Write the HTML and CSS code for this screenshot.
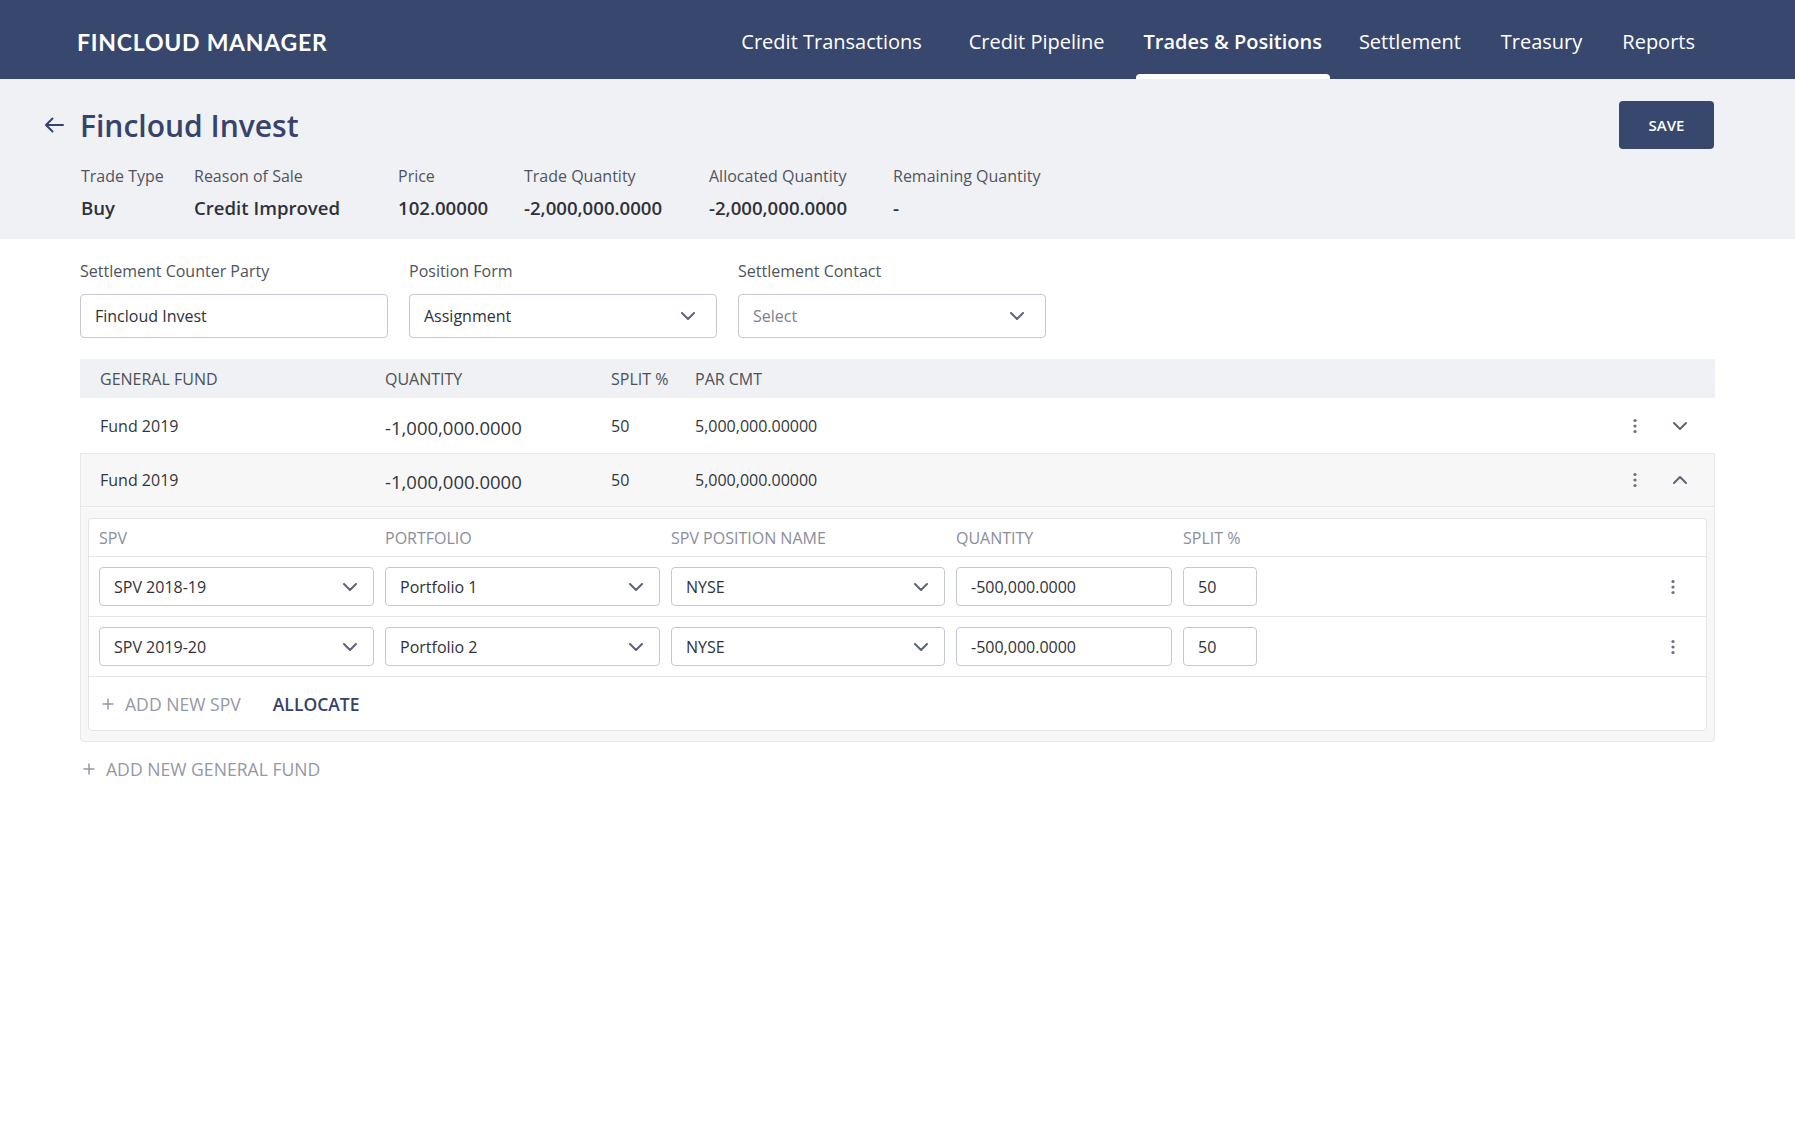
FILE: index.html
```html
<!DOCTYPE html>
<html lang="en">

<head>
    <meta charset="UTF-8">
    <meta name="viewport" content="width=device-width, initial-scale=1.0">
    <title>Fincloud Manager</title>
    <link rel="stylesheet" href="styles.css">
</head>

<body>
    <header class="topbar">
        <div class="logo">FINCLOUD MANAGER</div>
        <nav class="nav">
            <a class="nav-item first">Credit Transactions</a>
            <a class="nav-item">Credit Pipeline</a>
            <a class="nav-item active">Trades &amp; Positions</a>
            <a class="nav-item">Settlement</a>
            <a class="nav-item">Treasury</a>
            <a class="nav-item">Reports</a>
        </nav>
    </header>

    <section class="summary">
        <div class="summary-head">
            <div class="title-wrap">
                <svg class="back" width="20" height="16" viewBox="0 0 20 16">
                    <path d="M8.5 1.5 L2 8 L8.5 14.5 M2 8 H19" fill="none" stroke="#36436b" stroke-width="2" stroke-linecap="round" stroke-linejoin="round"/>
                </svg>
                <h1 class="title">Fincloud Invest</h1>
            </div>
            <button class="btn-save">SAVE</button>
        </div>
        <div class="facts">
            <div class="fact"><span class="fact-label">Trade Type</span><span class="fact-value">Buy</span></div>
            <div class="fact"><span class="fact-label">Reason of Sale</span><span class="fact-value">Credit Improved</span></div>
            <div class="fact"><span class="fact-label">Price</span><span class="fact-value">102.00000</span></div>
            <div class="fact"><span class="fact-label">Trade Quantity</span><span class="fact-value">-2,000,000.0000</span></div>
            <div class="fact"><span class="fact-label">Allocated Quantity</span><span class="fact-value">-2,000,000.0000</span></div>
            <div class="fact"><span class="fact-label">Remaining Quantity</span><span class="fact-value">-</span></div>
        </div>
    </section>

    <main class="content">
        <div class="form-row">
            <div class="field">
                <label class="field-label">Settlement Counter Party</label>
                <div class="input">Fincloud Invest</div>
            </div>
            <div class="field">
                <label class="field-label">Position Form</label>
                <div class="input select">Assignment
                    <svg class="chev" width="14" height="8" viewBox="0 0 14 8"><path d="M1 1 L7 7 L13 1" fill="none" stroke="#5d6577" stroke-width="2" stroke-linecap="round" stroke-linejoin="round"/></svg>
                </div>
            </div>
            <div class="field">
                <label class="field-label">Settlement Contact</label>
                <div class="input select placeholder">Select
                    <svg class="chev" width="14" height="8" viewBox="0 0 14 8"><path d="M1 1 L7 7 L13 1" fill="none" stroke="#5d6577" stroke-width="2" stroke-linecap="round" stroke-linejoin="round"/></svg>
                </div>
            </div>
        </div>

        <div class="funds">
            <div class="funds-head">
                <span>GENERAL FUND</span>
                <span>QUANTITY</span>
                <span>SPLIT %</span>
                <span>PAR CMT</span>
                <span></span>
            </div>

            <div class="fund-row">
                <span>Fund 2019</span>
                <span class="qty">-1,000,000.0000</span>
                <span>50</span>
                <span>5,000,000.00000</span>
                <div class="row-actions">
                    <svg width="16" height="16" viewBox="0 0 16 16"><circle cx="8" cy="2.5" r="1.6" fill="#6b7080"/><circle cx="8" cy="8" r="1.6" fill="#6b7080"/><circle cx="8" cy="13.5" r="1.6" fill="#6b7080"/></svg>
                    <svg width="16" height="16" viewBox="0 0 16 16"><path d="M2 5 L8 11 L14 5" fill="none" stroke="#5d6577" stroke-width="2" stroke-linecap="round" stroke-linejoin="round"/></svg>
                </div>
            </div>

            <div class="fund-open">
                <div class="fund-row">
                    <span>Fund 2019</span>
                    <span class="qty">-1,000,000.0000</span>
                    <span>50</span>
                    <span>5,000,000.00000</span>
                    <div class="row-actions">
                        <svg width="16" height="16" viewBox="0 0 16 16"><circle cx="8" cy="2.5" r="1.6" fill="#6b7080"/><circle cx="8" cy="8" r="1.6" fill="#6b7080"/><circle cx="8" cy="13.5" r="1.6" fill="#6b7080"/></svg>
                        <svg width="16" height="16" viewBox="0 0 16 16"><path d="M2 11 L8 5 L14 11" fill="none" stroke="#5d6577" stroke-width="2" stroke-linecap="round" stroke-linejoin="round"/></svg>
                    </div>
                </div>

                <div class="spv-card">
                    <div class="spv-head">
                        <span>SPV</span>
                        <span>PORTFOLIO</span>
                        <span>SPV POSITION NAME</span>
                        <span>QUANTITY</span>
                        <span>SPLIT %</span>
                        <span></span>
                    </div>
                    <div class="spv-row">
                        <div class="box select">SPV 2018-19
                            <svg class="chev" width="14" height="8" viewBox="0 0 14 8"><path d="M1 1 L7 7 L13 1" fill="none" stroke="#5d6577" stroke-width="2" stroke-linecap="round" stroke-linejoin="round"/></svg>
                        </div>
                        <div class="box select">Portfolio 1
                            <svg class="chev" width="14" height="8" viewBox="0 0 14 8"><path d="M1 1 L7 7 L13 1" fill="none" stroke="#5d6577" stroke-width="2" stroke-linecap="round" stroke-linejoin="round"/></svg>
                        </div>
                        <div class="box select">NYSE
                            <svg class="chev" width="14" height="8" viewBox="0 0 14 8"><path d="M1 1 L7 7 L13 1" fill="none" stroke="#5d6577" stroke-width="2" stroke-linecap="round" stroke-linejoin="round"/></svg>
                        </div>
                        <div class="box">-500,000.0000</div>
                        <div class="box">50</div>
                        <svg class="kebab" width="16" height="16" viewBox="0 0 16 16"><circle cx="8" cy="2.5" r="1.6" fill="#6b7080"/><circle cx="8" cy="8" r="1.6" fill="#6b7080"/><circle cx="8" cy="13.5" r="1.6" fill="#6b7080"/></svg>
                    </div>
                    <div class="spv-row">
                        <div class="box select">SPV 2019-20
                            <svg class="chev" width="14" height="8" viewBox="0 0 14 8"><path d="M1 1 L7 7 L13 1" fill="none" stroke="#5d6577" stroke-width="2" stroke-linecap="round" stroke-linejoin="round"/></svg>
                        </div>
                        <div class="box select">Portfolio 2
                            <svg class="chev" width="14" height="8" viewBox="0 0 14 8"><path d="M1 1 L7 7 L13 1" fill="none" stroke="#5d6577" stroke-width="2" stroke-linecap="round" stroke-linejoin="round"/></svg>
                        </div>
                        <div class="box select">NYSE
                            <svg class="chev" width="14" height="8" viewBox="0 0 14 8"><path d="M1 1 L7 7 L13 1" fill="none" stroke="#5d6577" stroke-width="2" stroke-linecap="round" stroke-linejoin="round"/></svg>
                        </div>
                        <div class="box">-500,000.0000</div>
                        <div class="box">50</div>
                        <svg class="kebab" width="16" height="16" viewBox="0 0 16 16"><circle cx="8" cy="2.5" r="1.6" fill="#6b7080"/><circle cx="8" cy="8" r="1.6" fill="#6b7080"/><circle cx="8" cy="13.5" r="1.6" fill="#6b7080"/></svg>
                    </div>
                    <div class="spv-foot">
                        <button class="add-link">
                            <svg width="12" height="12" viewBox="0 0 12 12"><path d="M6 0.5 V11.5 M0.5 6 H11.5" stroke="#9498a4" stroke-width="1.5"/></svg>
                            ADD NEW SPV
                        </button>
                        <button class="allocate">ALLOCATE</button>
                    </div>
                </div>
            </div>
        </div>

        <button class="add-link add-fund">
            <svg width="12" height="12" viewBox="0 0 12 12"><path d="M6 0.5 V11.5 M0.5 6 H11.5" stroke="#9498a4" stroke-width="1.5"/></svg>
            ADD NEW GENERAL FUND
        </button>
    </main>
</body>

</html>
```
FILE: styles.css
```css
* {
    margin: 0;
    box-sizing: border-box;
    padding: 0;
}

body {
    font-family: "Open Sans", "Liberation Sans", sans-serif;
    color: #33363d;
    background: #fff;
}

button {
    font-family: inherit;
    border: none;
    background: none;
    cursor: pointer;
}

/* top bar */
.topbar {
    display: flex;
    align-items: center;
    justify-content: space-between;
    height: 79px;
    padding: 4px 91px 0 77px;
    background: #38476e;
}

.logo {
    font-family: Lato, "Open Sans", sans-serif;
    font-weight: 700;
    font-size: 23px;
    letter-spacing: 0.75px;
    color: #fff;
}

.nav {
    display: flex;
    height: 100%;
    gap: 22px;
}

.nav-item {
    position: relative;
    display: flex;
    align-items: center;
    padding: 0 9px;
    font-size: 20px;
    color: #fff;
}

.nav-item.first {
    margin-right: 7px;
}

.nav-item.active {
    font-weight: 600;
    padding: 0 8px;
    margin-right: -2px;
}

.nav-item.active::after {
    content: "";
    position: absolute;
    left: 0;
    right: 0;
    bottom: 0;
    height: 5px;
    border-radius: 4px 4px 0 0;
    background: #fff;
}

/* summary */
.summary {
    padding: 22px 81px 18px 80px;
    background: #f0f1f5;
}

.summary-head {
    display: flex;
    align-items: center;
    justify-content: space-between;
}

.title-wrap {
    display: flex;
    align-items: center;
    gap: 16px;
    margin-left: -36px;
}

.title {
    font-size: 30px;
    font-weight: 600;
    color: #36436b;
}

.btn-save {
    width: 95px;
    height: 48px;
    border-radius: 4px;
    background: #38476e;
    color: #fff;
    font-size: 15px;
    font-weight: 600;
}

.facts {
    display: grid;
    grid-template-columns: 113px 204px 126px 185px 184px auto;
    margin-top: 16px;
    padding-left: 1px;
}

.fact {
    display: flex;
    flex-direction: column;
    gap: 8px;
}

.fact-label {
    font-size: 16px;
    line-height: 22px;
    color: #50545f;
}

.fact-value {
    font-size: 18.6px;
    line-height: 26px;
    font-weight: 600;
    color: #2f323a;
}

/* content */
.content {
    padding: 21px 80px 40px;
}

.form-row {
    display: grid;
    grid-template-columns: repeat(3, 308px);
    gap: 21px;
}

.field {
    display: flex;
    flex-direction: column;
    gap: 12px;
}

.field-label {
    font-size: 16px;
    line-height: 22px;
    color: #4f535e;
}

.input {
    display: flex;
    align-items: center;
    justify-content: space-between;
    height: 44px;
    padding: 0 21px 0 14px;
    border: 1px solid #c5c8d0;
    border-radius: 4px;
    font-size: 16px;
    color: #2f323a;
    background: #fff;
}

.input.placeholder {
    color: #7c8190;
}

.funds {
    margin-top: 21px;
}

.funds-head,
.fund-row {
    display: grid;
    grid-template-columns: 285px 226px 84px 1fr auto;
    align-items: center;
    padding: 0 27px 0 20px;
}

.funds-head {
    height: 39px;
    background: #f0f1f5;
    font-size: 16px;
    color: #4c505b;
}

.fund-row {
    height: 55px;
    font-size: 16px;
    color: #33363d;
}

.fund-row .qty {
    font-size: 18.5px;
    padding-top: 3px;
}

.row-actions {
    display: flex;
    align-items: center;
    gap: 29px;
}

.fund-open {
    border: 1px solid #e6e7eb;
    border-radius: 0 0 4px 4px;
    background: #f7f7f8;
    padding-bottom: 10px;
}

.fund-open .fund-row {
    height: 53px;
    padding: 0 26px 0 19px;
    border-bottom: 1px solid #e6e7eb;
}

.spv-card {
    margin: 11px 7px 0;
    border: 1px solid #e3e4e8;
    border-radius: 4px;
    background: #fff;
}

.spv-head,
.spv-row {
    display: grid;
    grid-template-columns: 275px 275px 274px 216px 74px 1fr;
    gap: 11px;
    align-items: center;
    padding: 0 25px 0 10px;
}

.spv-head {
    height: 38px;
    border-bottom: 1px solid #e6e7eb;
    font-size: 16px;
    color: #8a8e9b;
}

.spv-row {
    height: 60px;
    border-bottom: 1px solid #e6e7eb;
}

.spv-row .kebab {
    justify-self: end;
}

.box {
    display: flex;
    align-items: center;
    justify-content: space-between;
    height: 39px;
    padding: 0 16px 0 14px;
    border: 1px solid #c5c8d0;
    border-radius: 4px;
    font-size: 16px;
    color: #2f323a;
}

.spv-foot {
    display: flex;
    align-items: center;
    gap: 32px;
    height: 53px;
    padding-left: 13px;
}

.add-link {
    display: flex;
    align-items: center;
    gap: 11px;
    font-size: 17.6px;
    color: #9498a4;
}

.allocate {
    font-size: 17.5px;
    font-weight: 600;
    color: #34426a;
}

.add-fund {
    margin-top: 15px;
    margin-left: 3px;
}
```
